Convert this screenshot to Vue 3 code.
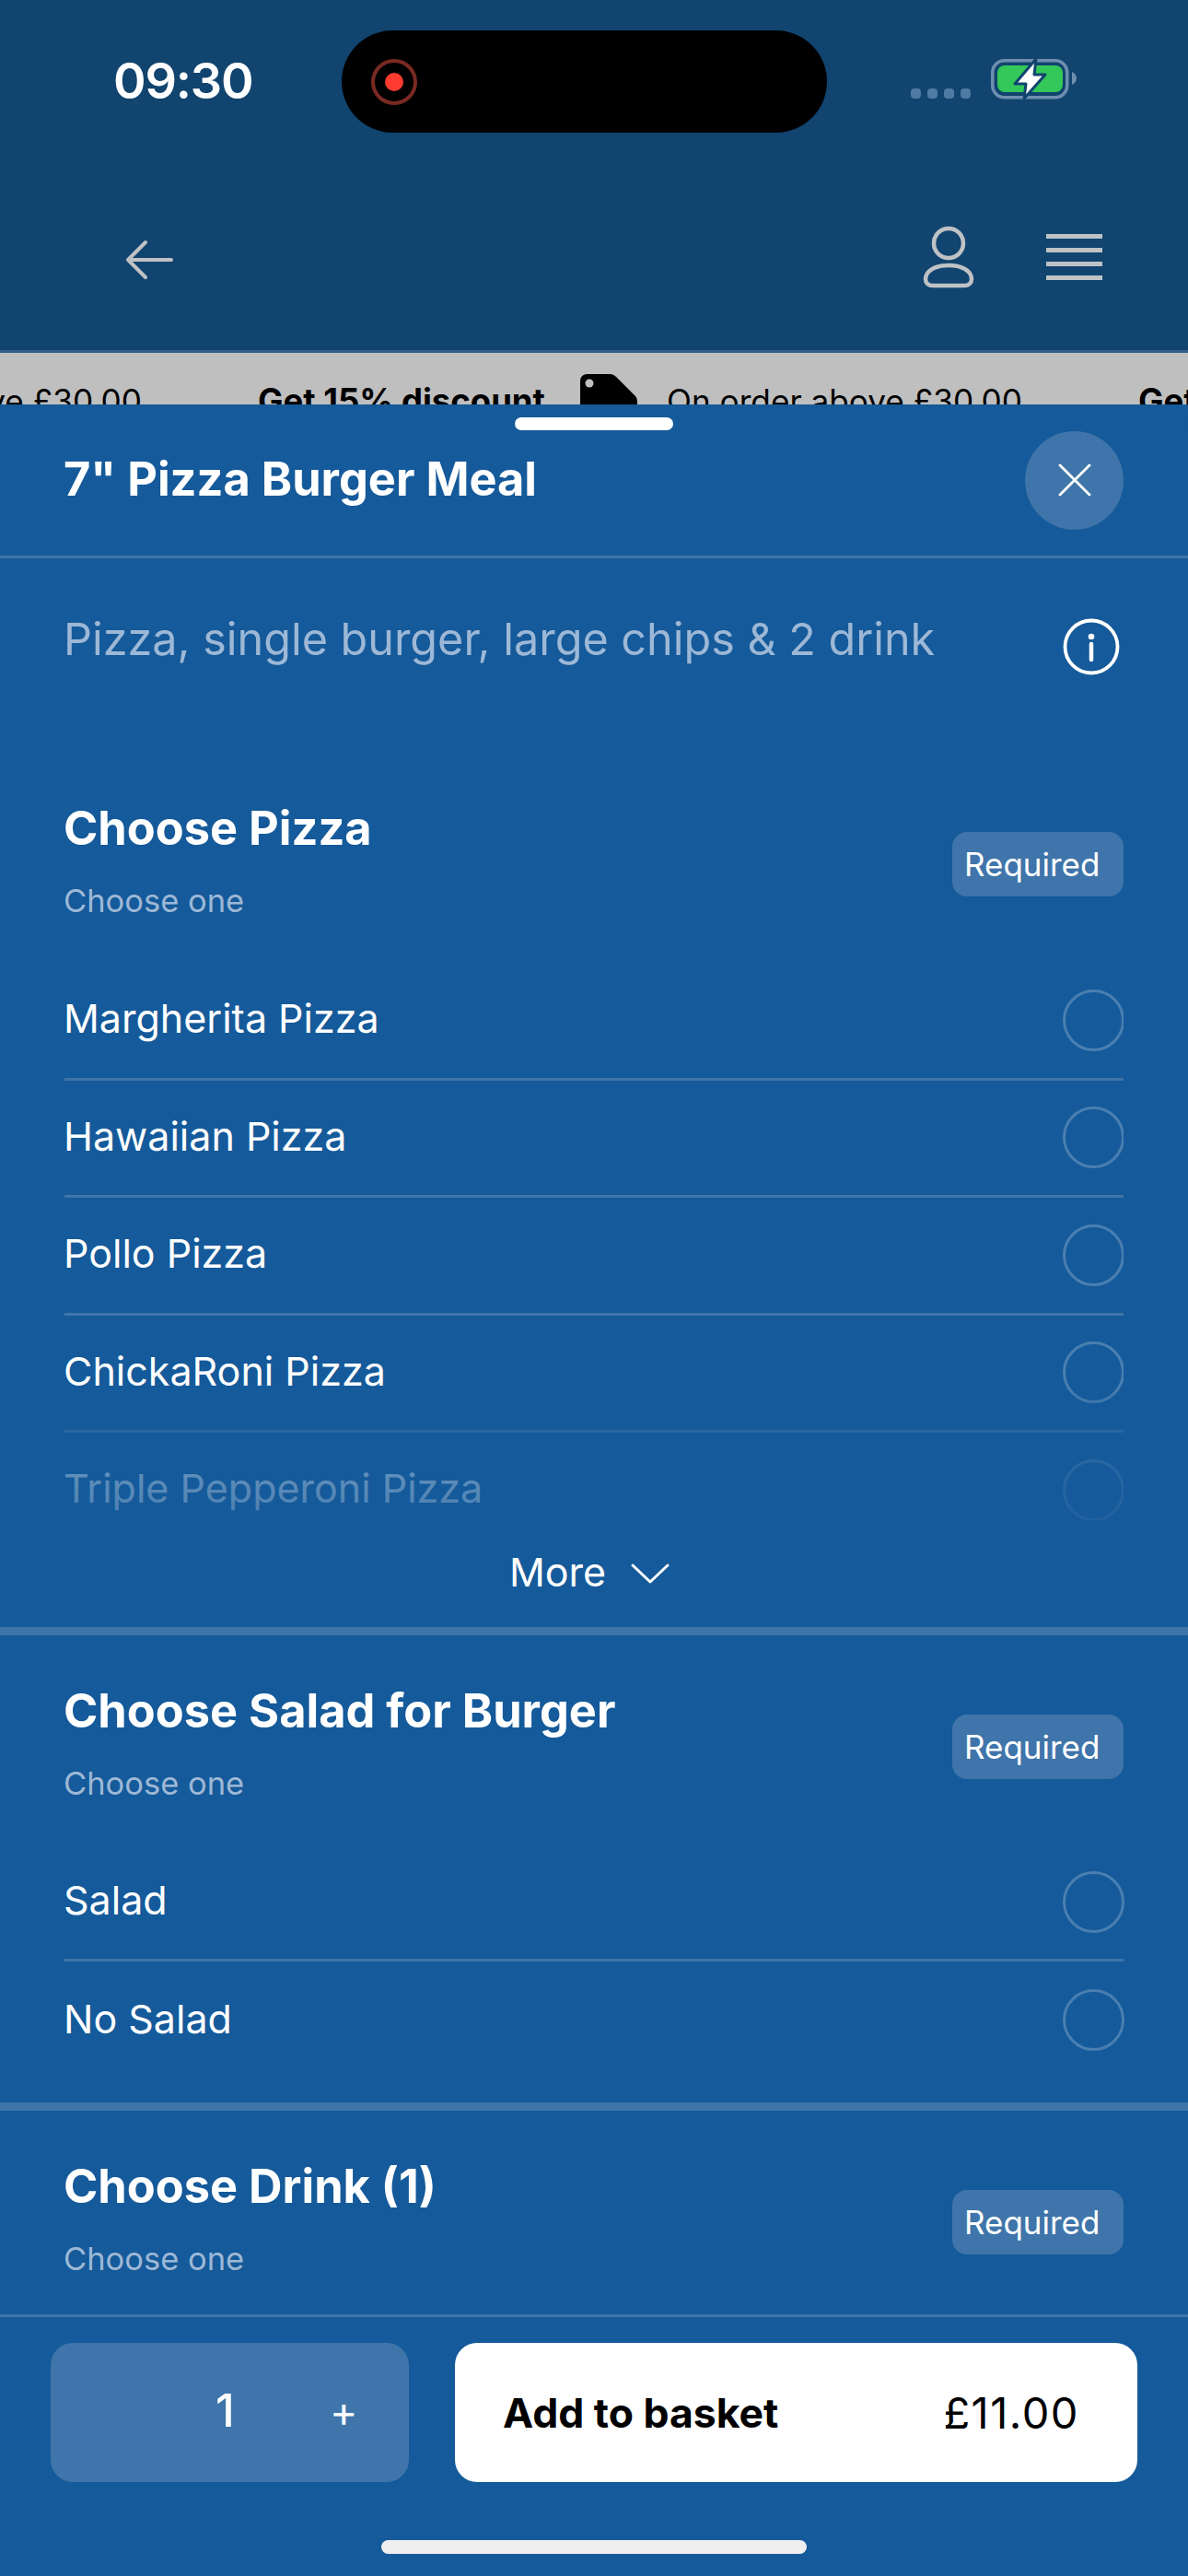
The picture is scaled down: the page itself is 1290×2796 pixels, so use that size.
<script setup>
const pizzas = ['Margherita Pizza', 'Hawaiian Pizza', 'Pollo Pizza', 'ChickaRoni Pizza', 'Triple Pepperoni Pizza']
const salads = ['Salad', 'No Salad']
</script>

<template>
  <div class="page">
    <header class="topbar">
      <div class="status">
        <span class="time">09:30</span>
        <div class="island">
          <span class="rec"><i></i></span>
        </div>
        <div class="indicators">
          <div class="signal"><i></i><i></i><i></i><i></i></div>
          <svg class="battery" width="96" height="48" viewBox="0 0 96 48">
            <rect x="1.750" y="4.750" width="81" height="40" rx="13" fill="none" stroke="#6f8fb0" stroke-width="3.500" />
            <rect x="7" y="10" width="71" height="29" rx="8" fill="#34c759" />
            <path d="M88 17c3 1.500 5 4 5 7s-2 5.500-5 7z" fill="#6f8fb0" />
            <path d="M49 3 26 30h12l-2 16 23-26H47z" fill="#fff" stroke="#11446f" stroke-width="3" stroke-linejoin="round" />
          </svg>
        </div>
      </div>
      <nav class="nav">
        <svg class="back" width="52" height="44" viewBox="0 0 52 44" fill="none" stroke="#bfc2c5" stroke-width="4" stroke-linecap="round" stroke-linejoin="round">
          <path d="M50 22H4M22 3 3 22l19 19" />
        </svg>
        <div class="nav-right">
          <svg width="56" height="68" viewBox="0 0 56 68" fill="none" stroke="#bfc2c5" stroke-width="4.500">
            <circle cx="28" cy="19" r="16" />
            <path d="M11 65h34c5 0 8-3 8-7 0-10-12-15-25-15S3 48 3 58c0 4 3 7 8 7z" />
          </svg>
          <div class="burger"><i></i><i></i><i></i><i></i></div>
        </div>
      </nav>
    </header>

    <div class="promo">
      <span class="promo-item">On order above £30.00</span>
      <b>Get 15% discount</b>
      <svg class="tag" width="62" height="62" viewBox="0 0 62 62">
        <path d="M8 0h24c3 0 5 1 7 3l21 21c2 2 2 5 2 8v30H0V8c0-5 3-8 8-8z" fill="#000" />
        <circle cx="10" cy="10" r="4.500" fill="#bfbfbf" />
      </svg>
      <span>On order above £30.00</span>
      <b>Get 15% discount</b>
    </div>

    <main class="sheet">
      <span class="handle"></span>
      <div class="sheet-head">
        <h1>7" Pizza Burger Meal</h1>
        <button class="close" aria-label="Close">
          <svg width="36" height="36" viewBox="0 0 36 36" stroke="#fff" stroke-width="2.800" stroke-linecap="round">
            <path d="M2 2l32 32M34 2 2 34" />
          </svg>
        </button>
      </div>

      <div class="scroller">
        <div class="desc">
          <p>Pizza, single burger, large chips &amp; 2 drink</p>
          <svg width="62" height="62" viewBox="0 0 62 62" fill="none" stroke="#fff">
            <circle cx="31" cy="31" r="28.500" stroke-width="3.800" />
            <circle cx="31" cy="20" r="3.300" fill="#fff" stroke="none" />
            <path d="M31 28v17" stroke-width="4.500" stroke-linecap="round" />
          </svg>
        </div>

        <section class="group first">
          <div class="group-head">
            <div>
              <h2>Choose Pizza</h2>
              <small>Choose one</small>
            </div>
            <span class="badge">Required</span>
          </div>
          <div class="options clipped">
            <div v-for="p in pizzas" :key="p" class="option">
              <span>{{ p }}</span>
              <i class="radio"></i>
            </div>
            <div class="fade"></div>
          </div>
          <div class="more">
            <span>More</span>
            <svg width="44" height="24" viewBox="0 0 44 24" fill="none" stroke="#fff" stroke-width="3" stroke-linecap="round" stroke-linejoin="round">
              <path d="M3 3l19 18L41 3" />
            </svg>
          </div>
        </section>

        <section class="group second">
          <div class="group-head">
            <div>
              <h2>Choose Salad for Burger</h2>
              <small>Choose one</small>
            </div>
            <span class="badge">Required</span>
          </div>
          <div class="options">
            <div v-for="s in salads" :key="s" class="option">
              <span>{{ s }}</span>
              <i class="radio"></i>
            </div>
          </div>
        </section>

        <section class="group last">
          <div class="group-head">
            <div>
              <h2>Choose Drink (1)</h2>
              <small>Choose one</small>
            </div>
            <span class="badge">Required</span>
          </div>
        </section>
      </div>

      <footer class="footer">
        <div class="actions">
          <div class="stepper">
            <span class="qty">1</span>
            <span class="plus">+</span>
          </div>
          <button class="add">
            <b>Add to basket</b>
            <span>£11.00</span>
          </button>
        </div>
        <span class="home"></span>
      </footer>
    </main>
  </div>
</template>

<style>
html,
body {
  margin: 0;
  background: #155a9a;
}
</style>

<style scoped>
.page {
  width: 1290px;
  height: 2796px;
  display: flex;
  flex-direction: column;
  overflow: hidden;
  font-family: Inter, "Liberation Sans", sans-serif;
  color: #fff;
}

.topbar {
  height: 380px;
  background: #11446f;
  border-bottom: 3px solid #335f88;
  flex: none;
}

.status {
  position: relative;
  height: 177px;
}

.time {
  position: absolute;
  left: 123px;
  top: 56px;
  font-size: 54px;
  font-weight: 600;
  letter-spacing: -1.200px;
  line-height: 63px;
}

.island {
  position: absolute;
  left: 371px;
  top: 33px;
  width: 527px;
  height: 111px;
  border-radius: 56px;
  background: #000;
  display: flex;
  align-items: center;
  padding-left: 32px;
  box-sizing: border-box;
}

.rec {
  width: 50px;
  height: 50px;
  border: 4px solid #7a2a22;
  border-radius: 50%;
  box-sizing: border-box;
  display: flex;
  align-items: center;
  justify-content: center;
}

.rec i {
  width: 20px;
  height: 20px;
  border-radius: 50%;
  background: #ff3b30;
}

.indicators {
  position: absolute;
  left: 989px;
  top: 61px;
  display: flex;
  align-items: flex-end;
  gap: 22px;
}

.signal {
  display: flex;
  gap: 7px;
  padding-bottom: 2px;
}

.signal i {
  width: 11px;
  height: 11px;
  border-radius: 4px;
  background: #4f7ba3;
}

.nav {
  display: flex;
  justify-content: space-between;
  align-items: center;
  padding: 0 93px 0 136px;
  height: 146px;
  margin-top: 29px;
  box-sizing: border-box;
}

.back {
  margin-top: 5px;
}

.nav-right {
  display: flex;
  align-items: center;
  gap: 78px;
}

.burger {
  display: flex;
  flex-direction: column;
  gap: 10px;
  width: 61px;
}

.burger i {
  height: 5px;
  background: #bfc2c5;
}

.promo {
  height: 56px;
  flex: none;
  background: #bfbfbf;
  color: #000;
  white-space: nowrap;
  font-size: 35.200px;
  line-height: 44px;
  position: relative;
  overflow: hidden;
}

.promo > b {
  position: absolute;
  left: 280px;
  top: 30px;
  font-size: 36.500px;
}

.promo > b:last-child {
  left: 1236px;
}

.promo > span {
  position: absolute;
  left: 724px;
  top: 30px;
}

.promo > .promo-item {
  left: -232px;
}

.tag {
  position: absolute;
  left: 630px;
  top: 23px;
}

.sheet {
  position: relative;
  flex: 1;
  min-height: 0;
  display: flex;
  flex-direction: column;
  background: #155a9a;
  border-radius: 24px 24px 0 0;
}

.handle {
  position: absolute;
  left: 559px;
  top: 14px;
  width: 172px;
  height: 14px;
  border-radius: 7px;
  background: #fff;
}

.sheet-head {
  flex: none;
  height: 164px;
  border-bottom: 3px solid #3f75aa;
  display: flex;
  align-items: center;
  justify-content: space-between;
  padding: 0 70px 0 69px;
}

.sheet-head h1 {
  margin: -3px 0 0;
  font-size: 50.500px;
  font-weight: 700;
  line-height: 60px;
}

.close {
  width: 107px;
  height: 107px;
  border: 0;
  padding: 0;
  border-radius: 50%;
  background: #3f75aa;
  display: flex;
  align-items: center;
  justify-content: center;
}

.scroller {
  flex: 1;
  min-height: 0;
  overflow: hidden;
}

.desc {
  height: 263px;
  display: flex;
  justify-content: space-between;
  align-items: flex-start;
  padding: 59px 74px 0 69px;
  box-sizing: border-box;
}

.desc p {
  margin: 0;
  font-size: 48.500px;
  line-height: 58px;
  color: #9db8d6;
}

.desc svg {
  margin-top: 6px;
}

.group {
  padding: 52px 70px 26px;
  border-top: 9px solid #3f75aa;
}

.group.first {
  padding: 0 70px;
  border-top: 0;
}

.group.last {
  padding-bottom: 0;
}

.group-head {
  display: flex;
  justify-content: space-between;
  align-items: flex-start;
}

.group-head h2 {
  margin: 0 0 27px -1px;
  font-size: 50.500px;
  font-weight: 700;
  line-height: 60px;
}

.group-head small {
  display: block;
  margin-left: -1px;
  font-size: 34.500px;
  line-height: 44px;
  color: #9db8d6;
}

.badge {
  margin-top: 34px;
  height: 70px;
  width: 186px;
  border-radius: 16px;
  background: #3f75aa;
  font-size: 35px;
  line-height: 70px;
  padding-left: 13px;
  box-sizing: border-box;
}

.options.clipped {
  position: relative;
  height: 605px;
  margin-top: 45px;
  overflow: hidden;
}

.second .options {
  margin-top: 44px;
}

.second .option {
  height: 127px;
}

.option {
  height: 127.500px;
  box-sizing: border-box;
  display: flex;
  align-items: center;
  justify-content: space-between;
  font-size: 43px;
  border-bottom: 3px solid #3f75aa;
}

.option:last-of-type {
  border-bottom: 0;
}

.option span {
  margin: -4px 0 0 -1px;
}

.radio {
  width: 67px;
  height: 67px;
  margin-right: -1px;
  border: 3px solid #4a7fb1;
  border-radius: 50%;
  box-sizing: border-box;
}

.fade {
  position: absolute;
  left: 0;
  right: 0;
  bottom: 0;
  height: 150px;
  background: linear-gradient(rgba(21, 90, 154, 0), rgba(21, 90, 154, 0.6) 40%, rgba(21, 90, 154, 0.78));
}

.more {
  height: 116px;
  display: flex;
  align-items: center;
  justify-content: center;
  gap: 26px;
  font-size: 43px;
  margin-left: -9px;
}

.more span {
  margin-top: -4px;
}

.footer {
  flex: none;
  height: 284px;
  border-top: 3px solid #3f75aa;
  box-sizing: border-box;
  padding-top: 28px;
  position: relative;
}

.actions {
  display: flex;
  gap: 50px;
  padding: 0 55px;
}

.stepper {
  width: 389px;
  height: 151px;
  border-radius: 24px;
  background: #3f75aa;
  position: relative;
  font-size: 50px;
}

.qty {
  position: absolute;
  left: 179px;
  top: 43px;
  font-weight: 500;
}

.plus {
  position: absolute;
  left: 303px;
  top: 46px;
  font-size: 46px;
}

.add {
  width: 741px;
  height: 151px;
  border: 0;
  border-radius: 24px;
  background: #fff;
  color: #000;
  display: flex;
  align-items: center;
  justify-content: space-between;
  padding: 0 63px 0 52px;
  font-family: inherit;
  font-size: 47px;
  letter-spacing: 1.500px;
}

.add b {
  font-size: 44.500px;
  font-weight: 700;
  letter-spacing: 0;
}

.home {
  position: absolute;
  left: 414px;
  top: 242px;
  width: 462px;
  height: 15px;
  border-radius: 8px;
  background: #eee;
}
</style>
